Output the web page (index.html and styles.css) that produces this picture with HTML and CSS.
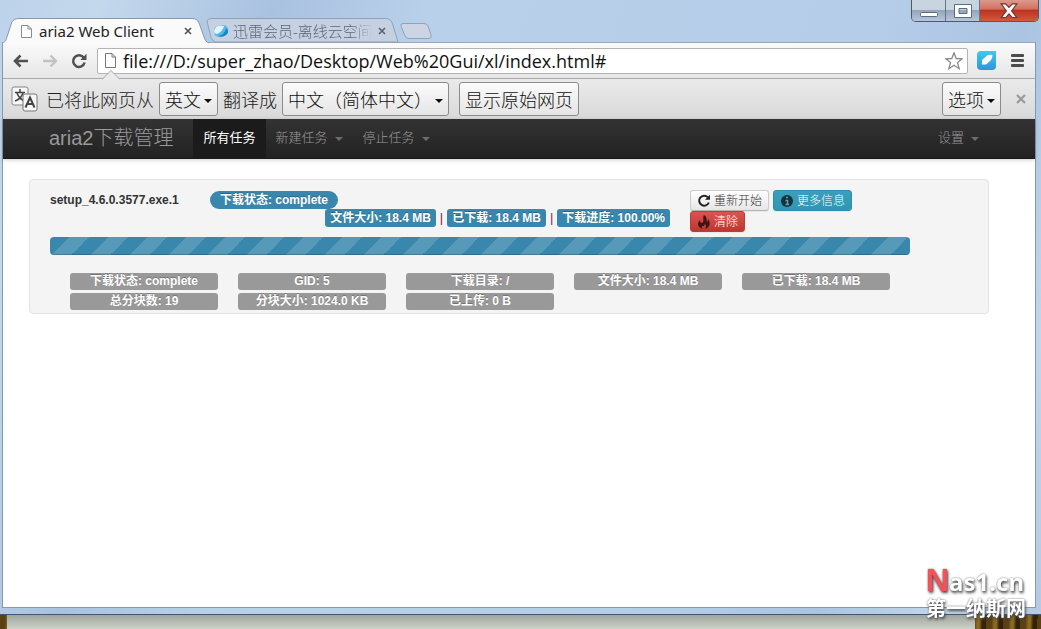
FILE: index.html
```html
<!DOCTYPE html>
<html lang="zh-CN">
<head>
<meta charset="utf-8">
<title>aria2 Web Client</title>
<link rel="stylesheet" href="styles.css">
</head>
<body>
<div class="window">
  <header class="titlebar">
    <div class="tabs">
      <div class="tab tab-active">
        <svg class="tab-shape" viewBox="0 0 206 25" preserveAspectRatio="none"><path d="M0 25C4 24 4 22 5 19L10 4Q12 .5 16 .5H192Q197 .5 199 5L204 19C205 22 206 24 209 25" fill="#fafafa" stroke="#8797ad"/></svg>
        <svg class="doc" viewBox="0 0 13 15"><path d="M1.500 1.500H8L11.500 5V13.500H1.500ZM8 1.500V5H11.500" fill="#fff" stroke="#8a8a8a"/></svg>
        <span class="tab-title">aria2 Web Client</span>
        <button class="tab-close" aria-label="关闭"><svg viewBox="0 0 8 8"><path d="M1 1L7 7M7 1L1 7" stroke="#555" stroke-width="1.700"/></svg></button>
      </div>
      <div class="tab tab-back">
        <svg class="tab-shape" viewBox="0 0 200 25" preserveAspectRatio="none"><path d="M1 3Q2 .5 6 .5H185Q190 .5 192 5L198 24H10Q7 24 5 19Z" fill="#c5d0e0" stroke="#8fa0b7"/></svg>
        <svg class="bird" viewBox="0 0 16 14"><path d="M1 8C0 3 5 1 9 1C14 1 16 4 15 8C13 13 6 14 3 12Q1 11 1 8Z" fill="#58b8e6"/><path d="M1 7Q3 0 11 2Q10 7 4 10Q1 10 1 7Z" fill="#dff5ff"/><path d="M5 12Q12 11 13 4Q17 8 13 11Q9 14 5 12Z" fill="#1684c8"/></svg>
        <span class="tab-title">迅雷会员-离线云空间</span>
        <button class="tab-close" aria-label="关闭"><svg viewBox="0 0 8 8"><path d="M1 1L7 7M7 1L1 7" stroke="#5c6470" stroke-width="1.700"/></svg></button>
      </div>
      <button class="new-tab" aria-label="新标签页"><svg viewBox="0 0 32 16"><path d="M3 .5H24Q27 .5 28 3L31 12Q32 15.500 29 15.500H9Q6 15.500 5 13L1 3Q0 .5 3 .5Z" fill="#cbd5e3" stroke="#92a2b8"/></svg></button>
    </div>
    <div class="controls">
      <button aria-label="最小化"><svg viewBox="0 0 18 6"><rect x=".5" y=".5" width="17" height="4" rx="1" fill="#fff" stroke="#5d6b80"/></svg></button>
      <button aria-label="最大化"><svg viewBox="0 0 18 14"><path d="M.5 .5H17.500V13.500H.5ZM5 4.500V9.500H13V4.500Z" fill="#fff" fill-rule="evenodd" stroke="#5d6b80"/></svg></button>
      <button class="close" aria-label="关闭窗口"><svg viewBox="0 0 16 14"><path d="M1 .8H5L8 4L11 .8H15L10.300 7L15 13H11L8 9.700L5 13H1L5.700 7Z" fill="#fff" stroke="#75332e"/></svg></button>
    </div>
  </header>

  <div class="browser">
    <div class="toolbar">
      <button class="nav-icon" aria-label="后退"><svg viewBox="0 0 16 14"><path d="M15 7H3M7.500 1.500L2 7L7.500 12.500" fill="none" stroke="#505050" stroke-width="2.600"/></svg></button>
      <button class="nav-icon" aria-label="前进"><svg viewBox="0 0 16 14"><path d="M1 7H13M8.500 1.500L14 7L8.500 12.500" fill="none" stroke="#c2c2c2" stroke-width="2.400"/></svg></button>
      <button class="nav-icon" aria-label="刷新"><svg viewBox="0 0 16 16"><path d="M12.600 4.600A5.800 5.800 0 1 0 13.600 9.500" fill="none" stroke="#505050" stroke-width="2.500"/><path d="M15.500 .8V7H9.300Z" fill="#505050"/></svg></button>
      <div class="omnibox">
        <svg class="doc" viewBox="0 0 13 15"><path d="M1.500 .5H8L11.500 4V14.500H1.500ZM8 .5V4H11.500" fill="#fff" stroke="#777"/></svg>
        <input type="text" aria-label="地址" value="file:///D:/super_zhao/Desktop/Web%20Gui/xl/index.html#">
        <button class="star" aria-label="收藏"><svg viewBox="0 0 18 18"><path d="M9 .8L11.200 6.500L17.300 6.800L12.500 10.600L14.200 16.700L9 13.300L3.800 16.700L5.500 10.600L.7 6.800L6.800 6.500Z" fill="#fff" stroke="#8a8a8a" stroke-width="1.300"/></svg></button>
        <svg class="notch" viewBox="0 0 18 10"><path d="M0 9.500L9 .5L18 9.500V10H0Z" fill="#ebebeb"/><path d="M0 9.500L9 .5L18 9.500" fill="none" stroke="#a9a9a9"/></svg>
      </div>
      <button class="ext" aria-label="迅雷"><svg viewBox="0 0 19 19"><defs><linearGradient id="e" x2="0" y2="1"><stop stop-color="#3ccaf0"/><stop offset="1" stop-color="#2c96dc"/></linearGradient></defs><path d="M4 0H19V15Q19 19 15 19H4Q0 19 0 15V4Q0 0 4 0Z" fill="url(#e)"/><path d="M5 13.500V9L10 4.500Q12 3.500 15.500 4Q15.500 8 13.500 9.500L9 13.500Z" fill="#fff"/></svg></button>
      <button class="menu" aria-label="菜单"><svg viewBox="0 0 13 13"><path d="M1 1.500H12M1 6.500H12M1 11.500H12" stroke="#4d4d4d" stroke-width="2.800" stroke-linecap="round"/></svg></button>
    </div>

    <div class="translate">
      <svg class="tr-icon" viewBox="0 0 27 26"><rect x="1" y="1" width="16" height="18" rx="2" fill="#f7f7f7" stroke="#888"/><path d="M9 3V6M4 6.500H14M12 7Q10 13 4 15M6 7Q8 13 14 15" fill="none" stroke="#444" stroke-width="1.500"/><rect x="12" y="8" width="14" height="17" rx="2" fill="#f7f7f7" stroke="#777"/><path d="M14.500 21.500L19 11.500L23.500 21.500M16 18H22" fill="none" stroke="#444" stroke-width="2"/></svg>
      <span>已将此网页从</span>
      <button class="tbtn">英文<i class="caret"></i></button>
      <span>翻译成</span>
      <button class="tbtn wide">中文（简体中文）<i class="caret"></i></button>
      <button class="tbtn original">显示原始网页</button>
      <button class="tbtn options">选项<i class="caret"></i></button>
      <button class="bar-close" aria-label="关闭翻译栏"><svg viewBox="0 0 10 10"><path d="M1 1L9 9M9 1L1 9" stroke="#999" stroke-width="2.200"/></svg></button>
    </div>

    <div class="page">
      <nav class="navbar">
        <a class="brand" href="#">aria2下载管理</a>
        <a class="nav-link current" href="#">所有任务</a>
        <a class="nav-link" href="#">新建任务<i class="caret"></i></a>
        <a class="nav-link" href="#">停止任务<i class="caret"></i></a>
        <a class="nav-link settings" href="#">设置<i class="caret"></i></a>
      </nav>
      <main class="well">
        <section class="task">
          <strong class="name">setup_4.6.0.3577.exe.1</strong>
          <div class="state">
            <span class="badge">下载状态: complete</span>
            <div class="stats"><span class="label">文件大小: 18.4 MB</span><span>|</span><span class="label">已下载: 18.4 MB</span><span>|</span><span class="label">下载进度: 100.00%</span></div>
          </div>
          <div class="actions">
            <button class="btn"><svg viewBox="0 0 14 14"><path d="M10.800 3.200A5 5 0 1 0 11.800 8.500" fill="none" stroke="#222" stroke-width="2"/><path d="M13 .8V5.800H8Z" fill="#222"/></svg>重新开始</button>
            <button class="btn info"><svg viewBox="0 0 14 14"><circle cx="7" cy="7" r="6" fill="#17303a"/><path d="M6 3.500H8M5.500 6.500H7.500V10M5.500 10.500H9" fill="none" stroke="#4fa9bd" stroke-width="1.500"/></svg>更多信息</button>
            <button class="btn danger"><svg viewBox="0 0 14 14"><path d="M7 0C11 3 9 5 10 7Q11 6 11 4C14 8 13 12 8 14Q10 11 8 9Q7 12 5 11Q4 13 6 14C0 12 0 8 3 5Q3 8 5 8C8 6 5 3 7 0Z" fill="#3a1715"/></svg>清除</button>
          </div>
        </section>
        <div class="progress" role="progressbar" aria-valuenow="100"><div class="bar" style="width:100%"></div></div>
        <div class="details">
          <span class="label">下载状态: complete</span>
          <span class="label">GID: 5</span>
          <span class="label">下载目录: /</span>
          <span class="label">文件大小: 18.4 MB</span>
          <span class="label">已下载: 18.4 MB</span>
          <span class="label">总分块数: 19</span>
          <span class="label">分块大小: 1024.0 KB</span>
          <span class="label">已上传: 0 B</span>
        </div>
      </main>
    </div>
  </div>
</div>
<div class="desktop"><span class="paper"></span></div>
<div class="watermark"><div class="wm-top"><b>N</b>as1.cn</div><div class="wm-sub">第一纳斯网</div></div>
</body>
</html>
```
FILE: styles.css
```css
* { box-sizing: border-box; }
body {
  margin: 0;
  min-height: 100vh;
  display: flex;
  flex-direction: column;
  font: 13px/20px "Liberation Sans", "Noto Sans CJK SC", sans-serif;
  color: #333;
  overflow: hidden;
}
button, input { font: inherit; color: inherit; }
button { border: 0; padding: 0; background: none; display: flex; align-items: center; justify-content: center; }
a { text-decoration: none; color: inherit; }
svg { display: block; flex: none; }

.window {
  flex: 1;
  display: flex;
  flex-direction: column;
  padding: 0 5px 6px 2px;
  border-bottom: 1px solid #42586f;
  background: linear-gradient(110deg, #bdd3ea 0, #c4d8ec 8%, #a9c2e0 22%, #b9d0ea 34%, #b6cde9 70%, #aac4e2 82%, #c2d6ec 92%, #b4cae4 100%);
}
.titlebar { display: flex; height: 42px; justify-content: space-between; }
.tabs { display: flex; align-items: flex-end; font: 15px/24px "Noto Sans", "Noto Sans CJK SC", sans-serif; }
.tab { position: relative; display: flex; align-items: center; height: 24px; }
.tab > * { position: relative; }
.tab > .tab-shape { position: absolute; left: 0; top: 0; width: 100%; height: 25px; overflow: visible; }
.tab-active { width: 204px; padding: 2px 14px 0 18px; z-index: 1; color: #222; }
.tab-back { width: 194px; padding: 2px 14px 0 7px; color: #5b6574; }
.tab-title { flex: 1; margin-left: 6px; white-space: nowrap; overflow: hidden; }
.tab-back .tab-title { margin-left: 4px; margin-right: 6px; font-weight: 300; -webkit-mask-image: linear-gradient(90deg, #000 85%, transparent); }
.tab-close svg { width: 8px; height: 8px; }
.doc { width: 13px; height: 15px; }
.bird { width: 16px; height: 14px; }
.new-tab { margin-bottom: 3px; }
.new-tab svg { width: 32px; height: 16px; }

.controls { display: flex; height: 22px; border: 1px solid #4d5a6e; border-top: 0; border-radius: 0 0 5px 5px; overflow: hidden; margin-right: -3px; }
.controls button { width: 34px; background: linear-gradient(#c9d4e1 45%, #94a5bb 50%, #b7c6d9); border-right: 1px solid #66758a; }
.controls button:first-child { padding-top: 8px; }
.controls svg { width: 18px; }
.controls .close { width: 58px; border: 0; background: linear-gradient(#dc9a8b 0, #d27261 42%, #bd3320 50%, #cf5a3c); }

.browser { flex: 1; display: flex; flex-direction: column; background: #fff; border: 1px solid #8797ad; border-top-color: #9aa7b9; }
.toolbar { display: flex; align-items: center; height: 36px; padding: 0 11px 0 10px; background: linear-gradient(#fafafa, #e6e6e6); border-bottom: 1px solid #a9a9a9; }
.nav-icon { width: 16px; margin-right: 13px; }
.nav-icon svg { width: 16px; }
.omnibox { position: relative; flex: 1; display: flex; align-items: center; height: 26px; margin-left: -3px; padding: 0 4px 0 6px; background: #fff; border: 1px solid #b3b3b3; border-radius: 2px; }
.omnibox input { flex: 1; min-width: 0; border: 0; padding: 0; margin-left: 6px; background: none; color: #111; font: 18px/24px "Open Sans", sans-serif; outline: 0; }
.star svg { width: 18px; }
.notch { position: absolute; left: 4px; top: 21px; width: 18px; height: 10px; }
.ext { margin-left: 9px; }
.ext svg { width: 19px; }
.menu { margin: 0 0 0 15px; }
.menu svg { width: 13px; }

.translate { display: flex; align-items: center; height: 40px; padding: 0 9px 0 8px; background: linear-gradient(#eaeaea, #d9d9d9); color: #222; font: 18px/24px "Noto Sans CJK SC", sans-serif; white-space: nowrap; }
.translate span { margin-right: 5px; font-weight: 300; }
.tr-icon { width: 27px; height: 26px; margin-right: 8px; }
.tbtn { height: 34px; padding: 0 5px; margin-right: 5px; border: 1px solid #8b8b8b; border-radius: 3px; background: linear-gradient(#fbfbfb, #e5e5e5); color: #111; font-weight: 300; }
.wide { margin-right: 10px; }
.caret { width: 0; height: 0; border: 4px solid transparent; border-top-color: currentColor; border-bottom: 0; }
.tbtn .caret { margin-left: 3px; margin-top: 3px; }
.options { margin-left: auto; margin-right: 15px; }
.bar-close svg { width: 10px; }

.page { flex: 1; background: #fff; }
.navbar { display: flex; height: 40px; padding: 0 46px; align-items: stretch; line-height: 38px; color: #999; background: linear-gradient(#333, #222); border-bottom: 1px solid #1b1b1b; box-shadow: 0 1px 4px rgba(0,0,0,.2); }
.brand { font-size: 20px; font-weight: 300; margin-right: 20px; }
.nav-link { display: flex; align-items: center; padding: 0 10px 2px; font-weight: 300; }
.nav-link .caret { margin-left: 7px; margin-top: 2px; opacity: .6; }
.current { color: #fff; background: #1b1b1b; font-weight: 400; }
.settings { margin-left: auto; }

.well { max-width: 960px; margin: 20px 26px; padding: 10px 78px 3px 20px; background: #f4f4f4; border: 1px solid #e3e3e3; border-radius: 4px; }
.task { display: grid; grid-template-columns: 140px 460px 1fr; column-gap: 20px; }
.name { font-size: 12px; }
.state { display: flex; flex-direction: column; align-items: flex-start; padding-top: 1px; }
.label, .badge { background: #999; color: #fff; font-size: 12px; font-weight: bold; text-shadow: 0 -1px 0 rgba(0,0,0,.25); white-space: nowrap; border-radius: 3px; line-height: 17px; text-align: center; }
.badge { background: #3a87ad; border-radius: 9px; padding: 0 10px; line-height: 18px; }
.stats { align-self: flex-end; display: flex; gap: 4px; line-height: 18px; color: #8b2252; }
.stats .label { background: #3a87ad; padding: 0 5px; line-height: 18px; }
.actions { display: flex; flex-wrap: wrap; column-gap: 4px; }
.btn { height: 21px; padding: 0 6px; font-size: 12px; font-weight: 300; border: 1px solid #ccc; border-bottom-color: #b3b3b3; border-radius: 3px; background: linear-gradient(#fff, #e6e6e6); box-shadow: 0 1px 1px rgba(0,0,0,.06); white-space: nowrap; }
.btn svg { width: 14px; margin-right: 3px; }
.info { background: linear-gradient(#3a9fba, #2f96b4); border-color: #2d8daa; color: #fff; }
.danger { background: linear-gradient(#dc5450, #bd362f); border-color: #b3403b; color: #fff; }
.progress { height: 18px; margin-top: 5px; border-radius: 4px; overflow: hidden; background: #eee; }
.bar { height: 100%; background-color: #3a87ad; background-image: linear-gradient(-45deg, rgba(255,255,255,.15) 25%, transparent 25%, transparent 50%, rgba(255,255,255,.15) 50%, rgba(255,255,255,.15) 75%, transparent 75%); background-size: 39px 39px; box-shadow: inset 0 -1px 0 rgba(0,0,0,.2); }
.details { display: grid; grid-template-columns: repeat(5, 1fr); gap: 3px 20px; padding: 18px 20px 0; }

.desktop { height: 14px; padding: 0 66px 0 7px; background: repeating-linear-gradient(92deg, #5a4012 0 5px, #8a6a20 8px 10px, #33230a 13px 17px); }
.paper { display: block; height: 100%; background: linear-gradient(#9fa49e, #cdd2c8); }
.watermark { position: fixed; right: 15px; bottom: 8px; color: #fff; text-shadow: 1px 2px 3px #444, 0 0 2px #777; white-space: nowrap; }
.wm-top { font: bold 24px/30px "Noto Sans", sans-serif; }
.wm-top b { font-family: "Liberation Sans", sans-serif; font-size: 32px; color: #f65058; }
.wm-sub { font: bold 20px/24px "Liberation Sans", "Noto Sans CJK SC", sans-serif; }
```
